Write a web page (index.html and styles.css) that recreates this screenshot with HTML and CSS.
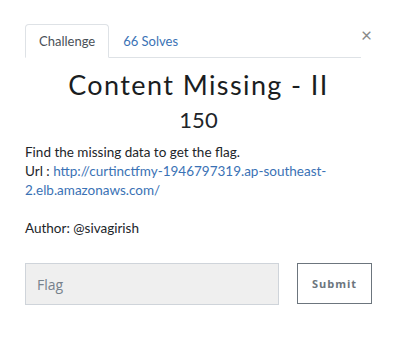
FILE: index.html
```html
<!DOCTYPE html>
<html lang="en">
<head>
    <meta charset="UTF-8">
    <meta name="viewport" content="width=device-width, initial-scale=1.0">
    <title>Content Missing - II</title>
    <link rel="stylesheet" href="styles.css">
</head>
<body>
    <div class="modal">
        <div class="top">
            <ul class="tabs">
                <li class="tab active">Challenge</li>
                <li class="tab"><a href="#">66 Solves</a></li>
            </ul>
            <span class="close">&times;</span>
        </div>

        <h2 class="title">Content Missing - II</h2>
        <h3 class="value">150</h3>

        <div class="desc">
            Find the missing data to get the flag.<br>
            Url : <a href="#">http://curtinctfmy-1946797319.ap-southeast-2.elb.amazonaws.com/</a><br>
            <br>
            Author: @sivagirish
        </div>

        <form class="flag-form">
            <input type="text" class="flag" placeholder="Flag">
            <button type="button" class="submit">Submit</button>
        </form>
    </div>
</body>
</html>
```

FILE: styles.css
```css
body {
    margin: 0;
    background-color: #fff;
    font-family: Lato, "Open Sans", sans-serif;
    color: #212529;
}

a {
    color: #3a72b5;
    text-decoration: none;
}

.modal {
    padding: 24px 25px 0 25px;
    width: 347px;
}

.top {
    display: flex;
    align-items: flex-start;
}

.tabs {
    list-style: none;
    margin: 0;
    padding: 0;
    display: flex;
    width: 336px;
    border-bottom: 1px solid #dee2e6;
}

.tab {
    font-size: 13px;
    line-height: 20px;
    padding: 6px 13px 6px 13px;
    border: 1px solid transparent;
    margin-bottom: -1px;
}

.tab.active {
    color: #495057;
    border-color: #dee2e6 #dee2e6 #fff;
    border-radius: 4px 4px 0 0;
}

.close {
    margin-left: auto;
    margin-top: 1px;
    font-size: 19px;
    line-height: 20px;
    color: #8a8a8a;
}

.title {
    font-weight: 400;
    font-size: 27px;
    letter-spacing: 1.4px;
    text-align: center;
    margin: 10px 0 0 0;
    line-height: 34px;
    color: #1a1d21;
}

.value {
    font-weight: 400;
    font-size: 22px;
    text-align: center;
    margin: 5px 0 0 0;
    line-height: 26px;
}

.desc {
    font-size: 13.5px;
    line-height: 19px;
    margin-top: 10px;
}

.flag-form {
    display: flex;
    margin-top: 25px;
}

.flag {
    width: 254px;
    height: 42px;
    box-sizing: border-box;
    padding: 0 11px;
    background-color: #efefef;
    border: 1px solid #cfd4da;
    font-family: "Open Sans", sans-serif;
    font-size: 14px;
    color: #495057;
}

.flag::placeholder {
    color: #77818c;
}

.submit {
    margin-left: 18px;
    width: 75px;
    height: 41px;
    background-color: #fff;
    border: 1px solid #6c757d;
    font-family: "Open Sans", sans-serif;
    font-weight: 700;
    font-size: 11px;
    letter-spacing: 1px;
    color: #6c757d;
}
```
